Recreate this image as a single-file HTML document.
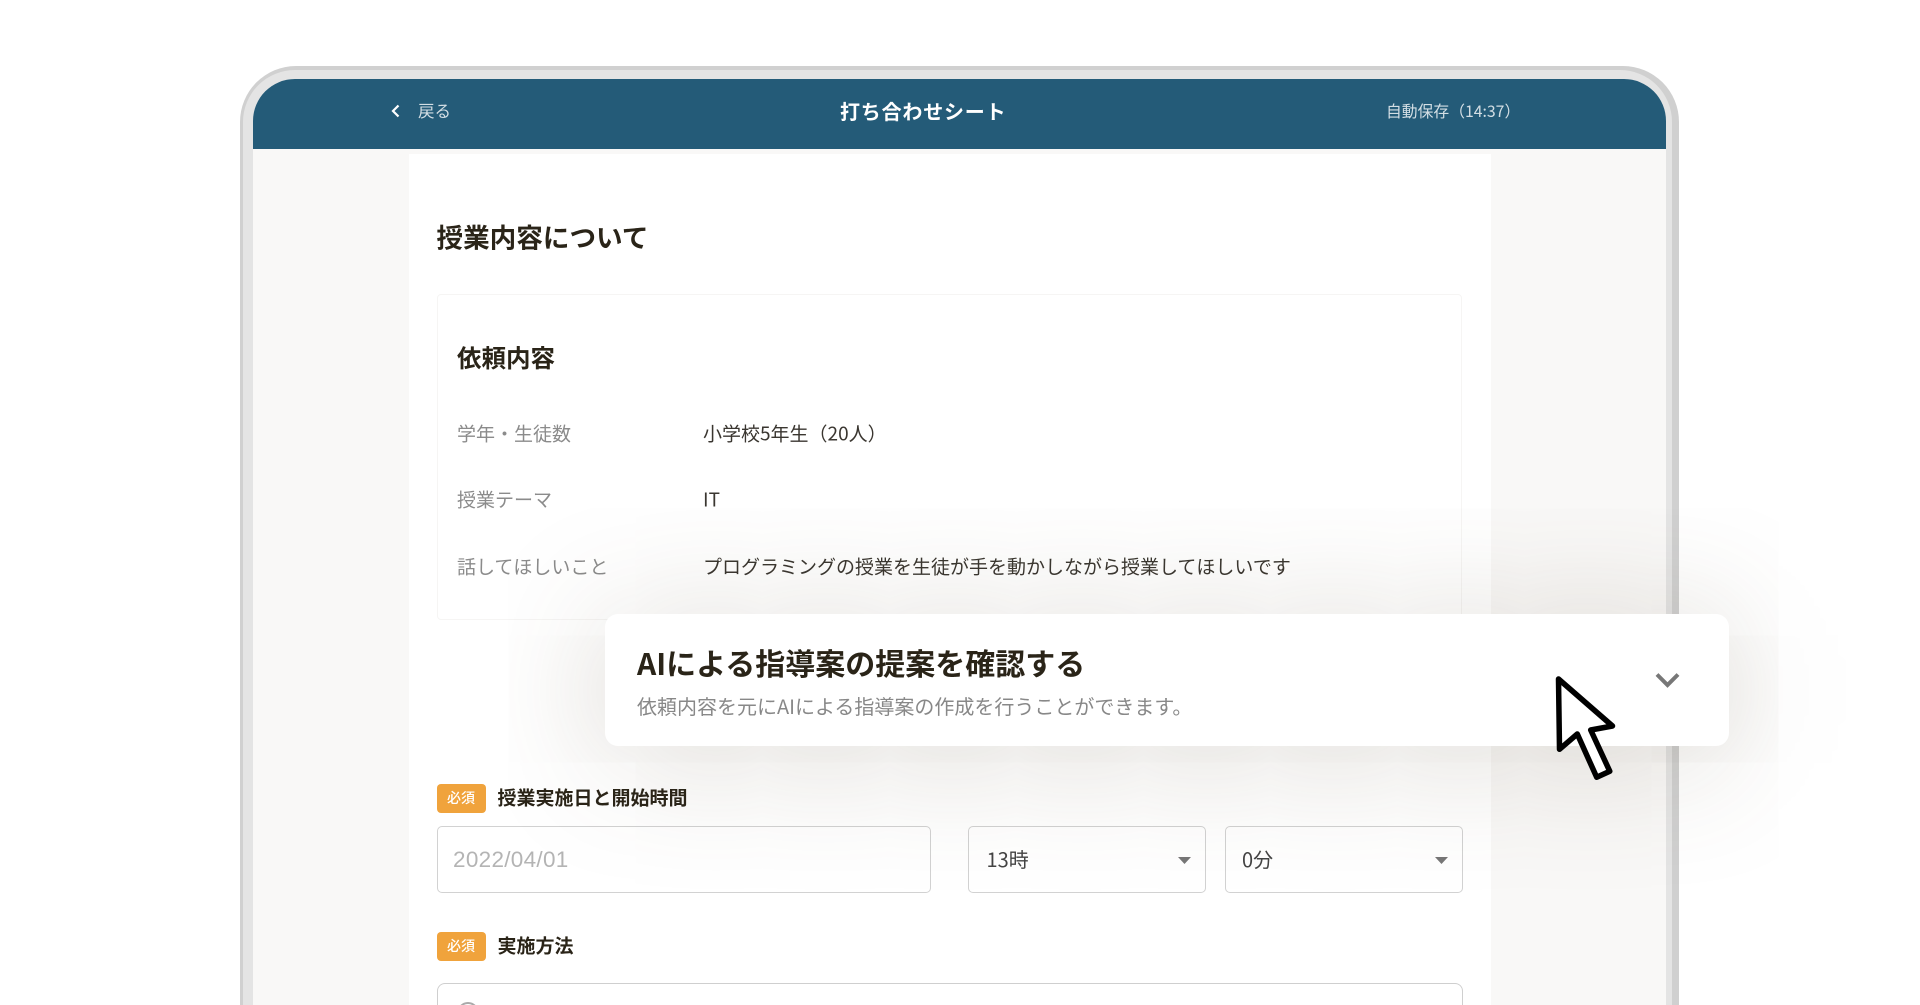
<!DOCTYPE html>
<html lang="ja">
<head>
<meta charset="utf-8">
<title>打ち合わせシート</title>
<style>
html,body{margin:0;padding:0;width:1920px;height:1005px;overflow:hidden;background:#fff}
body{position:relative;font-family:"Noto Sans CJK JP","Liberation Sans",sans-serif;color:#2a2418}
.a{position:absolute;white-space:nowrap}
.t{position:absolute;white-space:nowrap;line-height:1;transform:translateY(-50%)}
.outer{left:240px;top:66px;width:1439px;height:939px;background:#d0d0d0;border-radius:56px 56px 0 0;box-sizing:border-box}
.mid{left:243px;top:70px;width:1429px;height:935px;background:#e4e4e4;border-radius:52px 52px 0 0}
.screen{left:253px;top:79px;width:1413px;height:926px;background:#f9f8f7;border-radius:42px 42px 0 0;overflow:hidden}
.hdr{left:253px;top:79px;width:1413px;height:70px;background:#245b78;border-radius:42px 42px 0 0}
.content{left:409px;top:154px;width:1082px;height:851px;background:#fff}
.box{left:436.500px;top:294px;width:1025px;height:326px;box-sizing:border-box;border:1px solid #f6f5f4;border-radius:4px;background:#fff}
.lab{font-size:19px;color:#8b8b8b;left:457px}
.val{font-size:19px;color:#3a3630;left:703px}
.badge{left:436.500px;width:49px;height:29px;border-radius:4px;background:#f0a33c;color:#fff;font-size:14px;font-weight:500;line-height:28px;text-align:center}
.flab{left:497.500px;font-size:19px;font-weight:700;color:#2a2418}
.field{box-sizing:border-box;border:1.500px solid #d2d2d2;border-radius:5px;background:transparent;top:826px;height:67px}
.card{left:605px;top:614px;width:1124px;height:132px;background:#fff;border-radius:13px;box-shadow:0 10px 130px rgba(90,75,50,.26)}
</style>
</head>
<body>
<div class="a outer"></div>
<div class="a mid"></div>
<div class="a screen"></div>
<div class="a content"></div>
<div class="a hdr"></div>

<svg class="a" style="left:388px;top:102px" width="16" height="18" viewBox="0 0 16 18"><path d="M10.500 3.500 5 9l5.500 5.500" fill="none" stroke="#fff" stroke-width="2.200"/></svg>
<div class="t" style="left:418px;top:110px;font-size:16.500px;color:#d3dee4">戻る</div>
<div class="t" style="left:840px;top:111px;font-size:20px;font-weight:700;color:#fff;letter-spacing:.8px">打ち合わせシート</div>
<div class="t" style="left:1386px;top:110.500px;font-size:15.800px;color:#d3dee4">自動保存（14:37）</div>

<div class="t" style="left:436.500px;top:237px;font-size:26.600px;font-weight:700">授業内容について</div>

<div class="a box"></div>
<div class="t" style="left:457px;top:357.500px;font-size:24.500px;font-weight:700">依頼内容</div>
<div class="t lab" style="top:433px">学年・生徒数</div>
<div class="t val" style="top:433px">小学校5年生（20人）</div>
<div class="t lab" style="top:499px">授業テーマ</div>
<div class="t val" style="top:499px">IT</div>
<div class="t lab" style="top:565.500px">話してほしいこと</div>
<div class="t val" style="top:565.500px">プログラミングの授業を生徒が手を動かしながら授業してほしいです</div>

<div class="a badge" style="top:784px">必須</div>
<div class="t flab" style="top:797px">授業実施日と開始時間</div>
<div class="a field" style="left:436.500px;width:494px"></div>
<div class="t" style="left:453px;top:860px;font-family:'Liberation Sans',sans-serif;font-size:22.500px;letter-spacing:.3px;color:#b4b4b4">2022/04/01</div>
<div class="a field" style="left:968px;width:238px"></div>
<div class="t" style="left:986.500px;top:859px;font-size:20px;color:#444">13時</div>
<svg class="a" style="left:1178px;top:857px" width="13" height="7"><path d="M0 0h13L6.500 7z" fill="#777"/></svg>
<div class="a field" style="left:1225px;width:238px"></div>
<div class="t" style="left:1242px;top:859px;font-size:20px;color:#444">0分</div>
<svg class="a" style="left:1434.500px;top:857px" width="13" height="7"><path d="M0 0h13L6.500 7z" fill="#777"/></svg>

<div class="a badge" style="top:932px">必須</div>
<div class="t flab" style="top:945px">実施方法</div>
<div class="a" style="left:436.500px;top:983px;width:1026px;height:22px;box-sizing:border-box;border:1.500px solid #cfcfcf;border-bottom:0;border-radius:8px 8px 0 0;background:#fff"></div>
<svg class="a" style="left:457px;top:1002px" width="22" height="3" viewBox="0 0 22 3"><circle cx="11" cy="11" r="10" fill="none" stroke="#aaa" stroke-width="2"/></svg>

<div class="a card"></div>
<div class="t" style="left:637px;top:662px;font-size:30px;font-weight:700;color:#2a2418">AIによる指導案の提案を確認する</div>
<div class="t" style="left:637px;top:706px;font-size:20px;color:#888">依頼内容を元にAIによる指導案の作成を行うことができます。</div>
<svg class="a" style="left:1654px;top:671px" width="27" height="18" viewBox="0 0 27 18"><path d="M3 3.500 13.500 14 24 3.500" fill="none" stroke="#777" stroke-width="4"/></svg>
<svg class="a" style="left:1540px;top:660px" width="90" height="130" viewBox="1540 660 90 130"><path d="M1558.500 679 1559.500 749.300 1577.300 734 1596.700 777.300 1609.800 771.300 1590.700 730 1612.500 726Z" fill="#fff" stroke="#000" stroke-width="5.500" stroke-linejoin="round"/></svg>
</body>
</html>
